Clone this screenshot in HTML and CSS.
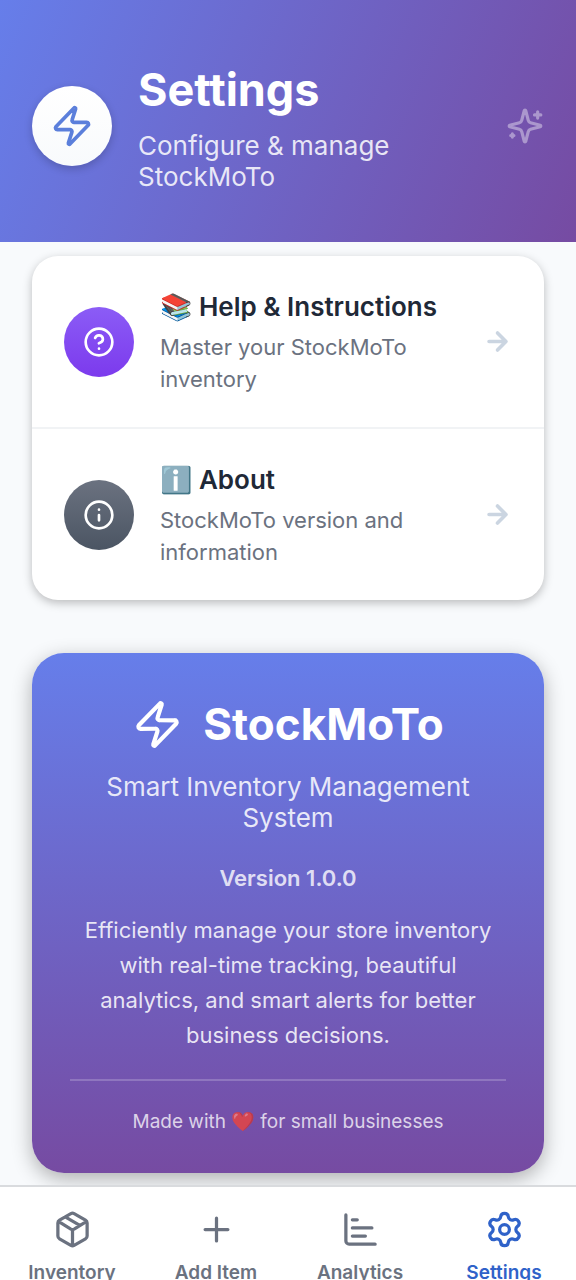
FILE: index.html
```html
<!DOCTYPE html>
<html lang="en">
<head>
<meta charset="utf-8">
<meta name="viewport" content="width=device-width, initial-scale=1">
<title>StockMoTo Settings</title>
<link rel="stylesheet" href="styles.css">
</head>
<body>
<div class="app">
  <header class="header">
    <span class="header-badge">
      <svg class="icon icon-header" viewBox="0 0 24 24" aria-hidden="true"><path d="M4 14a1 1 0 0 1-.78-1.63l9.9-10.2a.5.5 0 0 1 .86.46l-1.92 6.02A1 1 0 0 0 13 10h7a1 1 0 0 1 .78 1.63l-9.9 10.2a.5.5 0 0 1-.86-.46l1.92-6.02A1 1 0 0 0 11 14z"/></svg>
    </span>
    <div class="header-text">
      <h1 class="header-title">Settings</h1>
      <p class="header-subtitle">Configure &amp; manage StockMoTo</p>
    </div>
    <svg class="icon icon-sparkles" viewBox="0 0 24 24" aria-hidden="true"><path d="M9.937 15.5A2 2 0 0 0 8.5 14.063l-6.135-1.582a.5.5 0 0 1 0-.962L8.5 9.936A2 2 0 0 0 9.937 8.5l1.582-6.135a.5.5 0 0 1 .963 0L14.063 8.5A2 2 0 0 0 15.5 9.937l6.135 1.581a.5.5 0 0 1 0 .964L15.5 14.063a2 2 0 0 0-1.437 1.437l-1.582 6.135a.5.5 0 0 1-.963 0zM20 3v4M22 5h-4M4 17v2M5 18H3"/></svg>
  </header>

  <main class="content">
    <section class="menu">
      <a class="menu-row" href="#help">
        <span class="menu-badge menu-badge-help">
          <svg class="icon icon-menu" viewBox="0 0 24 24" aria-hidden="true"><circle cx="12" cy="12" r="10"/><path d="M9.09 9a3 3 0 0 1 5.83 1c0 2-3 3-3 3M12 17h.01"/></svg>
        </span>
        <span class="menu-text">
          <span class="menu-title">📚 Help &amp; Instructions</span>
          <span class="menu-subtitle">Master your StockMoTo inventory</span>
        </span>
        <svg class="icon icon-arrow" viewBox="0 0 24 24" aria-hidden="true"><path d="M5 12h14M12 5l7 7-7 7"/></svg>
      </a>
      <a class="menu-row" href="#about">
        <span class="menu-badge menu-badge-about">
          <svg class="icon icon-menu" viewBox="0 0 24 24" aria-hidden="true"><circle cx="12" cy="12" r="10"/><path d="M12 16v-4M12 8h.01"/></svg>
        </span>
        <span class="menu-text">
          <span class="menu-title">ℹ️ About</span>
          <span class="menu-subtitle">StockMoTo version and information</span>
        </span>
        <svg class="icon icon-arrow" viewBox="0 0 24 24" aria-hidden="true"><path d="M5 12h14M12 5l7 7-7 7"/></svg>
      </a>
    </section>

    <section class="about" id="about">
      <div class="about-brand">
        <svg class="icon icon-brand" viewBox="0 0 24 24" aria-hidden="true"><path d="M4 14a1 1 0 0 1-.78-1.63l9.9-10.2a.5.5 0 0 1 .86.46l-1.92 6.02A1 1 0 0 0 13 10h7a1 1 0 0 1 .78 1.63l-9.9 10.2a.5.5 0 0 1-.86-.46l1.92-6.02A1 1 0 0 0 11 14z"/></svg>
        <h2 class="about-name">StockMoTo</h2>
      </div>
      <p class="about-tagline">Smart Inventory Management System</p>
      <p class="about-version">Version 1.0.0</p>
      <p class="about-description">Efficiently manage your store inventory with real-time tracking, beautiful analytics, and smart alerts for better business decisions.</p>
      <p class="about-footer">Made with ❤️ for small businesses</p>
    </section>
  </main>

  <nav class="tabs">
    <a class="tab" href="#inventory">
      <svg class="icon icon-tab" viewBox="0 0 24 24" aria-hidden="true"><path d="M11 21.73a2 2 0 0 0 2 0l7-4A2 2 0 0 0 21 16V8a2 2 0 0 0-1-1.73l-7-4a2 2 0 0 0-2 0l-7 4A2 2 0 0 0 3 8v8a2 2 0 0 0 1 1.73zM12 22V12M3.3 7l7.703 4.734a2 2 0 0 0 1.994 0L20.7 7M7.5 4.27l9 5.15"/></svg>
      <span>Inventory</span>
    </a>
    <a class="tab" href="#add">
      <svg class="icon icon-tab" viewBox="0 0 24 24" aria-hidden="true"><path d="M5 12h14M12 5v14"/></svg>
      <span>Add Item</span>
    </a>
    <a class="tab" href="#analytics">
      <svg class="icon icon-tab" viewBox="0 0 24 24" aria-hidden="true"><path d="M3 3v16a2 2 0 0 0 2 2h16M7 16h8M7 11h12M7 6h3"/></svg>
      <span>Analytics</span>
    </a>
    <a class="tab tab-active" href="#settings" aria-current="page">
      <svg class="icon icon-tab" viewBox="0 0 24 24" aria-hidden="true"><path d="M9.671 4.136a2.34 2.34 0 0 1 4.659 0 2.34 2.34 0 0 0 3.319 1.915 2.34 2.34 0 0 1 2.33 4.033 2.34 2.34 0 0 0 0 3.831 2.34 2.34 0 0 1-2.33 4.033 2.34 2.34 0 0 0-3.319 1.915 2.34 2.34 0 0 1-4.659 0 2.34 2.34 0 0 0-3.32-1.915 2.34 2.34 0 0 1-2.33-4.033 2.34 2.34 0 0 0 0-3.831A2.34 2.34 0 0 1 6.35 6.051a2.34 2.34 0 0 0 3.319-1.915"/><circle cx="12" cy="12" r="3"/></svg>
      <span>Settings</span>
    </a>
  </nav>
</div>
</body>
</html>
```
FILE: styles.css
```css
* {
  box-sizing: border-box;
}

body {
  margin: 0;
  background: #f8fafc;
  font-family: Inter, "Noto Color Emoji", sans-serif;
  color: #1f2937;
}

h1, h2, p {
  margin: 0;
}

a {
  color: inherit;
  text-decoration: none;
}

.app {
  display: flex;
  flex-direction: column;
  height: 100vh;
  overflow: hidden;
}

.icon {
  flex: none;
  fill: none;
  stroke: currentColor;
  stroke-width: 2;
  stroke-linecap: round;
  stroke-linejoin: round;
}

/* Header */

.header {
  flex: none;
  display: flex;
  align-items: center;
  gap: 26px;
  padding: 60px 32px 50px;
  background: linear-gradient(113deg, #667eea 0%, #764ba2 100%);
  color: #fff;
}

.header-badge {
  flex: none;
  display: flex;
  align-items: center;
  justify-content: center;
  width: 80px;
  height: 80px;
  border-radius: 50%;
  background: linear-gradient(#fff, #f8fafc);
  box-shadow: 0 3px 8px rgba(0, 0, 0, 0.2);
  color: #5b7fdb;
}

.icon-header {
  width: 44px;
  height: 44px;
}

.header-text {
  flex: 1;
}

.header-title {
  font-size: 45px;
  font-weight: 700;
  line-height: 60px;
}

.header-subtitle {
  margin-top: 10px;
  font-size: 26px;
  line-height: 31px;
  color: rgba(255, 255, 255, 0.85);
}

.icon-sparkles {
  width: 38px;
  height: 38px;
  color: rgba(255, 255, 255, 0.4);
}

/* Menu */

.content {
  flex: none;
  padding: 14px 32px 12px;
}

.menu {
  border-radius: 26px;
  background: #fff;
  box-shadow: 0 3px 10px rgba(0, 0, 0, 0.25);
  overflow: hidden;
}

.menu-row {
  display: flex;
  align-items: center;
  gap: 26px;
  padding: 32px;
}

.menu-row + .menu-row {
  border-top: 2px solid #f1f3f5;
}

.menu-badge {
  flex: none;
  display: flex;
  align-items: center;
  justify-content: center;
  width: 70px;
  height: 70px;
  border-radius: 50%;
  color: #fff;
}

.menu-badge-help {
  background: linear-gradient(#8b5cf6, #7c3aed);
}

.menu-badge-about {
  background: linear-gradient(#6b7280, #4b5563);
}

.icon-menu {
  width: 32px;
  height: 32px;
}

.menu-text {
  flex: 1;
  display: flex;
  flex-direction: column;
  gap: 5px;
}

.menu-title {
  font-size: 26px;
  font-weight: 600;
  line-height: 38px;
}

.menu-subtitle {
  font-size: 22px;
  line-height: 32px;
  color: #6b7280;
}

.icon-arrow {
  width: 29px;
  height: 29px;
  stroke-width: 3;
  color: #cbd5e1;
}

/* About card */

.about {
  margin-top: 53px;
  padding: 38px;
  border-radius: 32px;
  background: linear-gradient(#667eea, #764ba2);
  box-shadow: 0 6px 20px rgba(0, 0, 0, 0.3);
  color: #fff;
  text-align: center;
}

.about-brand {
  display: flex;
  align-items: center;
  justify-content: center;
  gap: 20px;
}

.icon-brand {
  width: 51px;
  height: 51px;
}

.about-name {
  font-size: 44px;
  font-weight: 700;
  line-height: 66px;
}

.about-tagline {
  margin-top: 14px;
  font-size: 26px;
  line-height: 31px;
  color: rgba(255, 255, 255, 0.85);
}

.about-version {
  margin-top: 32px;
  font-size: 22px;
  font-weight: 600;
  line-height: 26px;
  color: rgba(255, 255, 255, 0.8);
}

.about-description {
  margin-top: 22px;
  font-size: 22px;
  line-height: 35px;
  color: rgba(255, 255, 255, 0.85);
}

.about-footer {
  margin-top: 26px;
  padding-top: 28px;
  border-top: 2px solid rgba(255, 255, 255, 0.2);
  font-size: 19px;
  line-height: 26px;
  color: rgba(255, 255, 255, 0.75);
}

/* Bottom navigation */

.tabs {
  flex: none;
  position: relative;
  display: grid;
  grid-template-columns: repeat(4, 1fr);
  padding: 23px 0 26px;
  border-top: 2px solid #d9dbde;
  background: #fff;
}

.tab {
  display: flex;
  flex-direction: column;
  align-items: center;
  gap: 11px;
  font-size: 19px;
  font-weight: 600;
  line-height: 26px;
  color: #6b7280;
}

.tab-active {
  color: #2f62c9;
}

.icon-tab {
  width: 39px;
  height: 39px;
}
```
